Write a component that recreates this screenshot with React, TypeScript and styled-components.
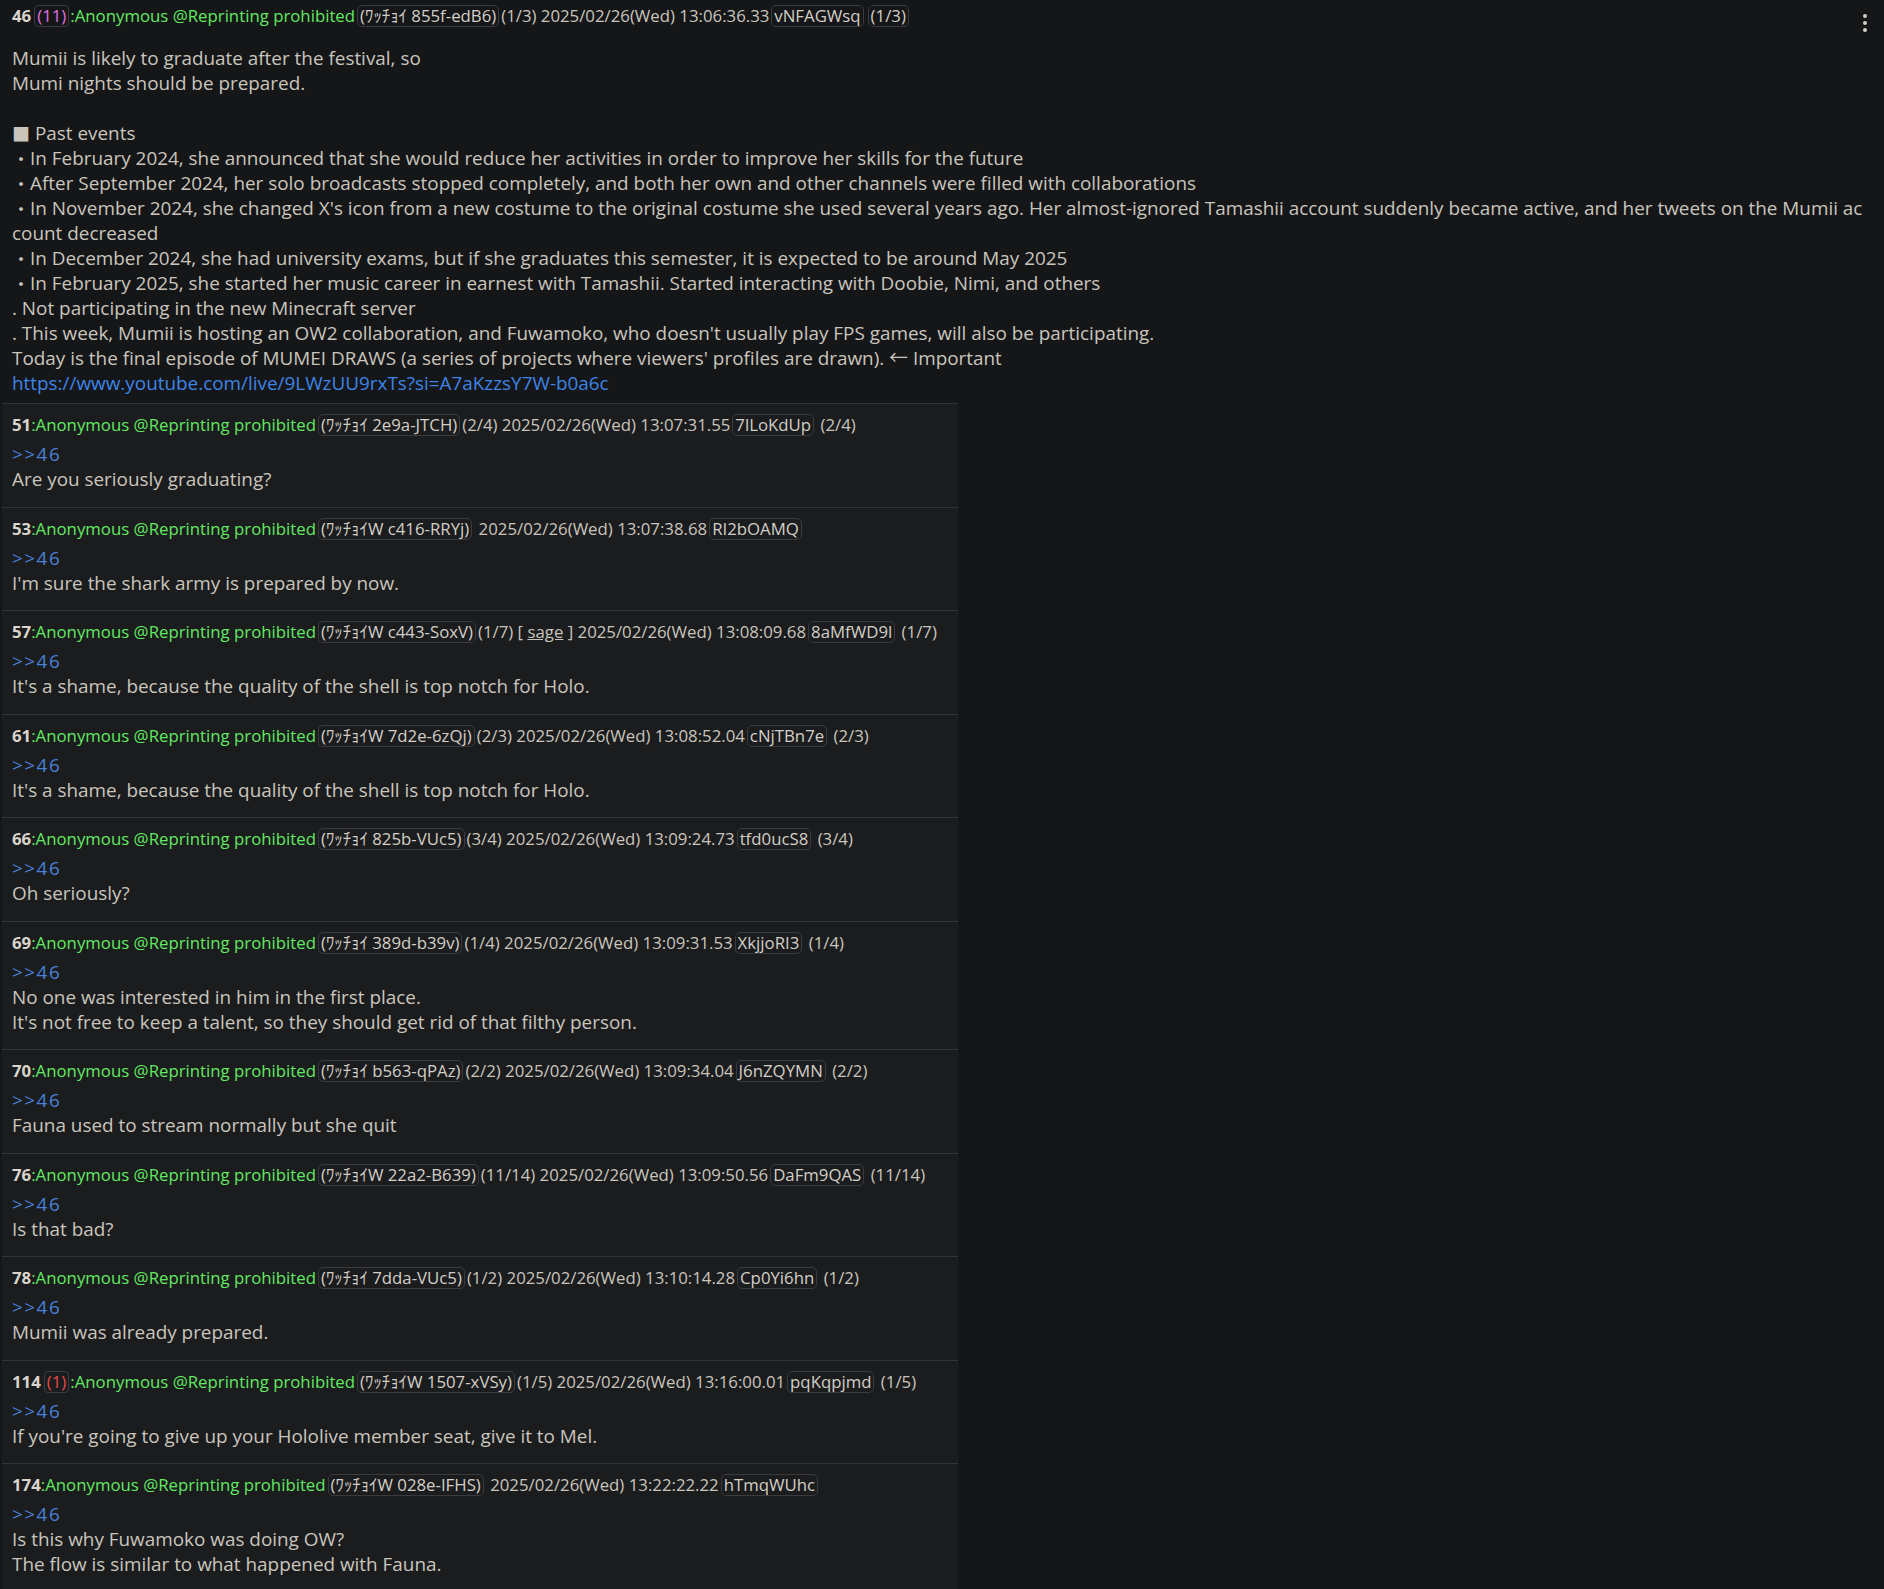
import React from 'react';
import styled, { createGlobalStyle } from 'styled-components';

const GlobalStyle = createGlobalStyle`
  html, body { margin: 0; padding: 0; background: #151618; }
  body {
    font-family: "Open Sans", "Noto Sans CJK JP", sans-serif;
    font-size: 18.9px;
    line-height: 25px;
    color: #c9c5bd;
  }
`;

const Page = styled.main`
  position: relative;
  min-height: 1589px;
`;

const Kebab = styled.button`
  position: absolute;
  top: 12px;
  right: 15px;
  display: flex;
  flex-direction: column;
  gap: 3px;
  padding: 2px;
  background: none;
  border: 0;
  span {
    width: 4px;
    height: 4px;
    border-radius: 50%;
    background: #d2cdc5;
  }
`;

const OpPost = styled.article`
  padding: 3px 20px 7px 12px;
`;

const Header = styled.div`
  font-size: 16.8px;
  line-height: 25px;
  height: 25px;
  white-space: nowrap;
`;

const Num = styled.span`
  font-weight: 700;
  color: #d9d5cd;
`;

const ResCount = styled.span<{ $tone: 'pink' | 'red' }>`
  display: inline-block;
  line-height: 20px;
  margin: 0 1px 0 3px;
  padding: 0 2px;
  border: 1px solid #3a3b3f;
  border-radius: 4px;
  color: ${(p) => (p.$tone === 'pink' ? '#e06fe0' : '#e54848')};
`;

const Name = styled.span`
  color: #62e962;
`;

const Tag = styled.span`
  display: inline-block;
  line-height: 20px;
  margin: 0 2px;
  padding: 0 2px;
  border: 1px solid #3a3b3f;
  border-radius: 5px;
  color: #d3cfc7;
`;

const Sage = styled.span`
  text-decoration: underline;
`;

const Body = styled.div<{ $op?: boolean }>`
  margin-top: ${(p) => (p.$op ? '18px' : '5px')};
  word-break: break-all;
`;

const Line = styled.div`
  min-height: 25px;
`;

const Bullet = styled.span`
  display: inline-block;
  vertical-align: top;
  height: 25px;
  line-height: 25px;
  overflow: hidden;
  font-family: "Noto Sans CJK JP", sans-serif;
  font-size: 18px;
`;

const Link = styled.a`
  color: #3d84e6;
  text-decoration: none;
`;

const Quote = styled.a`
  color: #4a80d8;
  text-decoration: none;
  letter-spacing: 1.5px;
`;

const Replies = styled.section`
  margin-left: 2px;
  width: 956px;
  background: #1b1c1e;
`;

const Reply = styled.article`
  border-top: 1px solid #333437;
  padding: 8px 10px 14.5px 10px;
`;

type ReplyData = {
  no: string;
  red?: string;
  id: string;
  count?: string;
  sage?: boolean;
  time: string;
  uid: string;
  ucount?: string;
  lines: string[];
};

const replies: ReplyData[] = [
  { no: '51', id: 'ﾜｯﾁｮｲ 2e9a-JTCH', count: '(2/4)', time: '13:07:31.55', uid: '7lLoKdUp', ucount: '(2/4)', lines: ['Are you seriously graduating?'] },
  { no: '53', id: 'ﾜｯﾁｮｲW c416-RRYj', time: '13:07:38.68', uid: 'RI2bOAMQ', lines: ["I'm sure the shark army is prepared by now."] },
  { no: '57', id: 'ﾜｯﾁｮｲW c443-SoxV', count: '(1/7)', sage: true, time: '13:08:09.68', uid: '8aMfWD9l', ucount: '(1/7)', lines: ["It's a shame, because the quality of the shell is top notch for Holo."] },
  { no: '61', id: 'ﾜｯﾁｮｲW 7d2e-6zQj', count: '(2/3)', time: '13:08:52.04', uid: 'cNjTBn7e', ucount: '(2/3)', lines: ["It's a shame, because the quality of the shell is top notch for Holo."] },
  { no: '66', id: 'ﾜｯﾁｮｲ 825b-VUc5', count: '(3/4)', time: '13:09:24.73', uid: 'tfd0ucS8', ucount: '(3/4)', lines: ['Oh seriously?'] },
  { no: '69', id: 'ﾜｯﾁｮｲ 389d-b39v', count: '(1/4)', time: '13:09:31.53', uid: 'XkjjoRI3', ucount: '(1/4)', lines: ['No one was interested in him in the first place.', "It's not free to keep a talent, so they should get rid of that filthy person."] },
  { no: '70', id: 'ﾜｯﾁｮｲ b563-qPAz', count: '(2/2)', time: '13:09:34.04', uid: 'J6nZQYMN', ucount: '(2/2)', lines: ['Fauna used to stream normally but she quit'] },
  { no: '76', id: 'ﾜｯﾁｮｲW 22a2-B639', count: '(11/14)', time: '13:09:50.56', uid: 'DaFm9QAS', ucount: '(11/14)', lines: ['Is that bad?'] },
  { no: '78', id: 'ﾜｯﾁｮｲ 7dda-VUc5', count: '(1/2)', time: '13:10:14.28', uid: 'Cp0Yi6hn', ucount: '(1/2)', lines: ['Mumii was already prepared.'] },
  { no: '114', red: '(1)', id: 'ﾜｯﾁｮｲW 1507-xVSy', count: '(1/5)', time: '13:16:00.01', uid: 'pqKqpjmd', ucount: '(1/5)', lines: ["If you're going to give up your Hololive member seat, give it to Mel."] },
  { no: '174', id: 'ﾜｯﾁｮｲW 028e-IFHS', time: '13:22:22.22', uid: 'hTmqWUhc', lines: ['Is this why Fuwamoko was doing OW?', 'The flow is similar to what happened with Fauna.'] },
];

const opLines: React.ReactNode[] = [
  'Mumii is likely to graduate after the festival, so',
  'Mumi nights should be prepared.',
  '',
  <><Bullet>■</Bullet> Past events</>,
  <><Bullet>・</Bullet>In February 2024, she announced that she would reduce her activities in order to improve her skills for the future</>,
  <><Bullet>・</Bullet>After September 2024, her solo broadcasts stopped completely, and both her own and other channels were filled with collaborations</>,
  <><Bullet>・</Bullet>In November 2024, she changed X's icon from a new costume to the original costume she used several years ago. Her almost-ignored Tamashii account suddenly became active, and her tweets on the Mumii account decreased</>,
  <><Bullet>・</Bullet>In December 2024, she had university exams, but if she graduates this semester, it is expected to be around May 2025</>,
  <><Bullet>・</Bullet>In February 2025, she started her music career in earnest with Tamashii. Started interacting with Doobie, Nimi, and others</>,
  '. Not participating in the new Minecraft server',
  ". This week, Mumii is hosting an OW2 collaboration, and Fuwamoko, who doesn't usually play FPS games, will also be participating.",
  "Today is the final episode of MUMEI DRAWS (a series of projects where viewers' profiles are drawn). ← Important",
  <Link href="#">https://www.youtube.com/live/9LWzUU9rxTs?si=A7aKzzsY7W-b0a6c</Link>,
];

function ReplyPost({ r }: { r: ReplyData }) {
  return (
    <Reply>
      <Header>
        <Num>{r.no}</Num>
        {r.red && <ResCount $tone="red">{r.red}</ResCount>}
        <Name>:Anonymous @Reprinting prohibited</Name>
        <Tag>({r.id})</Tag>
        {r.count}
        {r.sage && <> [ <Sage>sage</Sage> ]</>} 2025/02/26(Wed) {r.time}
        <Tag>{r.uid}</Tag>
        {r.ucount && <> {r.ucount}</>}
      </Header>
      <Body>
        <Line><Quote href="#">&gt;&gt;46</Quote></Line>
        {r.lines.map((l, i) => (
          <Line key={i}>{l}</Line>
        ))}
      </Body>
    </Reply>
  );
}

export default function App() {
  return (
    <>
      <GlobalStyle />
      <Page>
        <Kebab aria-label="menu">
          <span />
          <span />
          <span />
        </Kebab>
        <OpPost>
          <Header>
            <Num>46</Num>
            <ResCount $tone="pink">(11)</ResCount>
            <Name>:Anonymous @Reprinting prohibited</Name>
            <Tag>(ﾜｯﾁｮｲ 855f-edB6)</Tag>
            (1/3) 2025/02/26(Wed) 13:06:36.33
            <Tag>vNFAGWsq</Tag>
            <Tag>(1/3)</Tag>
          </Header>
          <Body $op>
            {opLines.map((l, i) => (
              <Line key={i}>{l}</Line>
            ))}
          </Body>
        </OpPost>
        <Replies>
          {replies.map((r) => (
            <ReplyPost key={r.no} r={r} />
          ))}
        </Replies>
      </Page>
    </>
  );
}
